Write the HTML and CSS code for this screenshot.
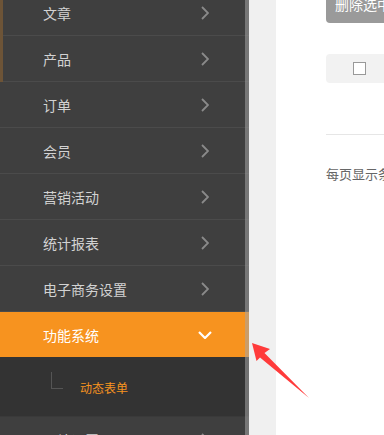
FILE: index.html
```html
<!DOCTYPE html>
<html lang="zh-CN">
<head>
<meta charset="utf-8">
<title>后台</title>
<link rel="stylesheet" href="styles.css">
</head>
<body>
<div class="page">
  <aside class="sidebar">
    <ul class="menu">
      <li class="item marked"><span>文章</span><svg class="chev" viewBox="0 0 8 14"><polyline points="1,1 7,7 1,13"/></svg></li>
      <li class="item marked"><span>产品</span><svg class="chev" viewBox="0 0 8 14"><polyline points="1,1 7,7 1,13"/></svg></li>
      <li class="item"><span>订单</span><svg class="chev" viewBox="0 0 8 14"><polyline points="1,1 7,7 1,13"/></svg></li>
      <li class="item"><span>会员</span><svg class="chev" viewBox="0 0 8 14"><polyline points="1,1 7,7 1,13"/></svg></li>
      <li class="item"><span>营销活动</span><svg class="chev" viewBox="0 0 8 14"><polyline points="1,1 7,7 1,13"/></svg></li>
      <li class="item"><span>统计报表</span><svg class="chev" viewBox="0 0 8 14"><polyline points="1,1 7,7 1,13"/></svg></li>
      <li class="item"><span>电子商务设置</span><svg class="chev" viewBox="0 0 8 14"><polyline points="1,1 7,7 1,13"/></svg></li>
      <li class="item active"><span>功能系统</span><svg class="chev-down" viewBox="0 0 14 8"><polyline points="1,1 7,7 13,1"/></svg></li>
      <li class="sub">
        <span class="corner"></span>
        <span class="sub-text">动态表单</span>
      </li>
      <li class="item"><span>网站设置</span><svg class="chev" viewBox="0 0 8 14"><polyline points="1,1 7,7 1,13"/></svg></li>
    </ul>
  </aside>
  <div class="gutter"></div>
  <main class="content">
    <div class="btn">删除选中</div>
    <div class="thead"><span class="checkbox"></span></div>
    <div class="rule"></div>
    <p class="pager">每页显示条数</p>
  </main>
  <svg class="arrow" viewBox="0 0 384 435" width="384" height="435">
    <path d="M252 343 L270 349 L264.5 353 L309 398 L260 357.5 L256.5 361 Z" fill="#ff3b3b"/>
  </svg>
</div>
</body>
</html>
```
FILE: styles.css
```css
* { box-sizing: border-box; }
html, body { margin: 0; padding: 0; }
body {
  width: 384px;
  height: 435px;
  overflow: hidden;
  background: #fff;
  font-family: "Noto Sans CJK SC", "Noto Sans", sans-serif;
}
.page {
  position: relative;
  display: flex;
  height: 435px;
  overflow: hidden;
}
.sidebar {
  position: relative;
  width: 249px;
  flex: none;
  background: #3f3f3f;
  overflow: hidden;
}
.sidebar::after {
  content: "";
  position: absolute;
  top: 0;
  bottom: 0;
  right: 0;
  width: 4px;
  background: rgba(165, 165, 165, 0.55);
}
.menu {
  list-style: none;
  margin: -10px 0 0 0;
  padding: 0;
}
.item {
  position: relative;
  display: flex;
  align-items: center;
  height: 46px;
  padding: 0 40px 0 43px;
  border-bottom: 1px solid #4b4b4b;
  font-size: 14px;
  color: #d2d2d2;
}
.item span { flex: 1; }
.item.marked::before {
  content: "";
  position: absolute;
  left: 0;
  top: 0;
  bottom: -1px;
  width: 3px;
  background: #6d5437;
}
.chev {
  width: 8px;
  height: 14px;
  fill: none;
  stroke: #8a8a8a;
  stroke-width: 1.8;
}
.item.active {
  height: 45px;
  border-bottom: none;
  background: #f7931f;
  color: #fff;
  padding-right: 37px;
}
.chev-down {
  width: 14px;
  height: 8px;
  fill: none;
  stroke: #fff;
  stroke-width: 2.2;
}
.sub {
  display: flex;
  align-items: flex-start;
  height: 60px;
  padding: 15px 0 0 51px;
  background: #333333;
  border-bottom: 1px solid #3a3a3a;
}
.corner {
  width: 12px;
  height: 17px;
  border-left: 1px solid #555;
  border-bottom: 1px solid #555;
}
.sub-text {
  margin: 8px 0 0 17px;
  font-size: 12px;
  line-height: 16px;
  color: #f7931f;
}
.gutter {
  width: 27px;
  flex: none;
  background: #f0f0f0;
}
.content {
  flex: 1;
  min-width: 0;
  padding-left: 50px;
  margin-top: -13px;
  overflow: hidden;
}
.btn {
  height: 36px;
  width: 90px;
  background: #9a9a9a;
  border-radius: 4px;
  color: #fff;
  font-size: 14px;
  line-height: 34px;
  padding-left: 9px;
  white-space: nowrap;
}
.thead {
  margin-top: 31px;
  height: 29px;
  width: 120px;
  background: #f2f2f2;
  border-radius: 4px;
  display: flex;
  align-items: center;
  padding-left: 27px;
}
.checkbox {
  width: 13px;
  height: 13px;
  border: 1px solid #999;
  background: #fff;
}
.rule {
  margin-top: 51px;
  height: 1px;
  width: 120px;
  background: #e6e6e6;
}
.pager {
  margin: 29px 0 0 0;
  font-size: 13px;
  line-height: 20px;
  color: #666;
  white-space: nowrap;
}
.arrow {
  position: absolute;
  left: 0;
  top: 0;
  pointer-events: none;
}
```
